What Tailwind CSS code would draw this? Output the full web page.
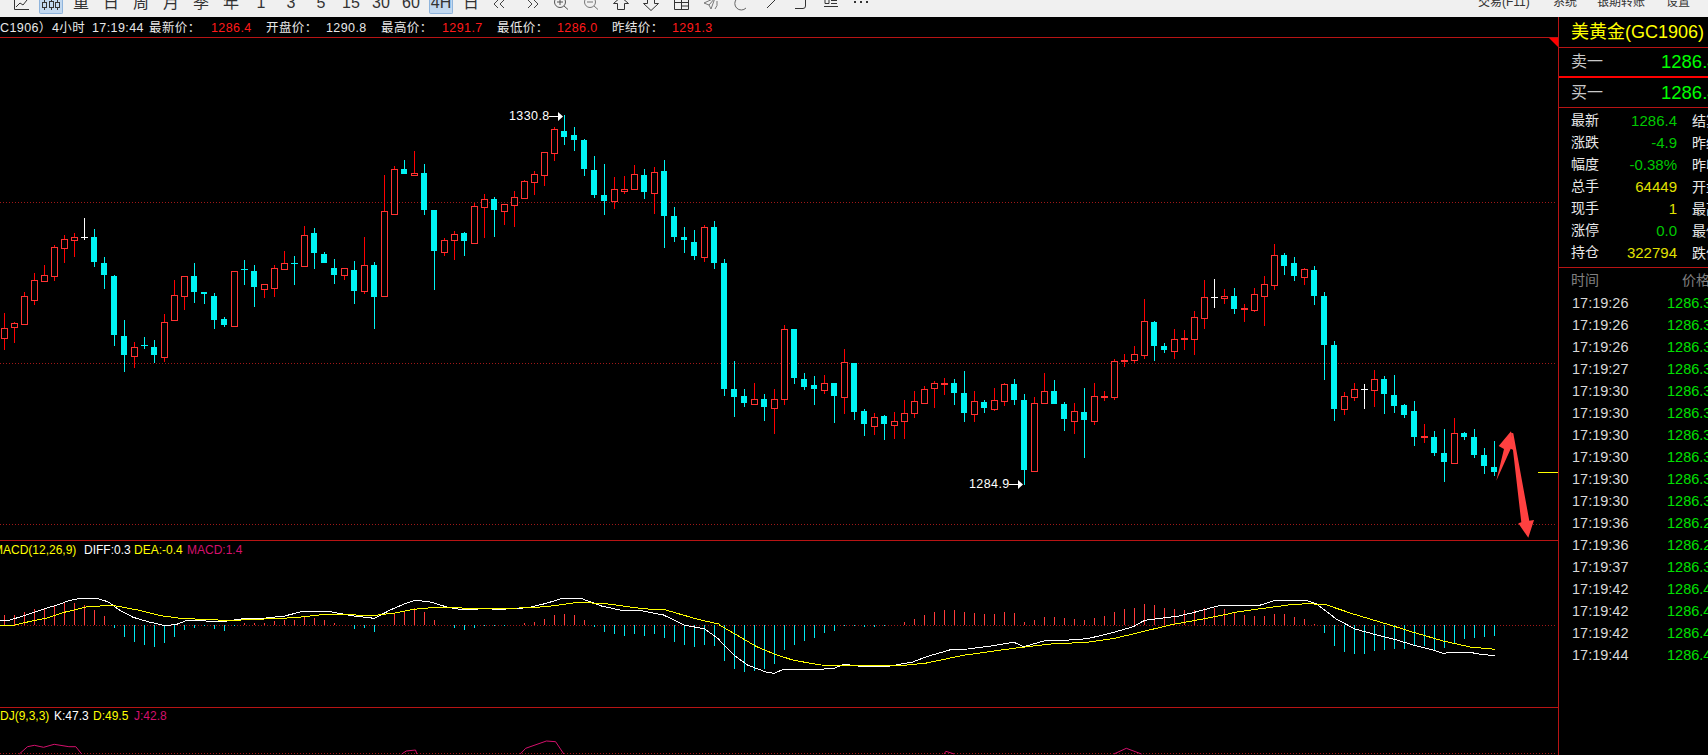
<!DOCTYPE html>
<html lang="zh">
<head>
<meta charset="UTF-8"/>
<title>美黄金 GC1906</title>
<script src="https://cdn.jsdelivr.net/npm/@tailwindcss/browser@4"></script>
</head>
<body class="bg-black">
<div class="w-[1708px] h-[755px] overflow-hidden flex flex-col bg-black font-['Liberation_Sans','Noto_Sans_CJK_SC',sans-serif]">

  <!-- barra de herramientas, cortada por arriba -->
  <div class="h-[17px] shrink-0 bg-[#f0f0f0] flex overflow-hidden text-[#333] pl-[6px]">
    <div class="w-[30px] flex justify-center"><svg class="w-[20px] h-[14px]" viewBox="0 0 20 14" fill="none" stroke="#333"><path d="M3.5 0V9.5H18M5 7L9 3L12 5L16 0"/></svg></div>
    <div class="w-[30px] flex justify-center"><div class="w-[24px] h-[14px] bg-[#c2d8ef] border border-t-0 border-[#8fb4dc] rounded-b-[2px] flex justify-center"><svg class="w-[20px] h-[13px]" viewBox="0 0 20 13" fill="none" stroke="#333"><path d="M3.5 0V10M10.5 0V10M16.5 0V10"/><rect x="1.5" y="2.5" width="4" height="5" fill="#c2d8ef"/><rect x="8.5" y="1.5" width="4" height="6" fill="#c2d8ef"/><rect x="14.5" y="2.5" width="4" height="5" fill="#c2d8ef"/></svg></div></div>
    <div class="w-[30px] text-center text-[16px] leading-[16px] -mt-[5px]">重</div>
    <div class="w-[30px] text-center text-[16px] leading-[16px] -mt-[5px]">日</div>
    <div class="w-[30px] text-center text-[16px] leading-[16px] -mt-[5px]">周</div>
    <div class="w-[30px] text-center text-[16px] leading-[16px] -mt-[5px]">月</div>
    <div class="w-[30px] text-center text-[16px] leading-[16px] -mt-[5px]">季</div>
    <div class="w-[30px] text-center text-[16px] leading-[16px] -mt-[5px]">年</div>
    <div class="w-[30px] text-center text-[16px] leading-[16px] -mt-[5px]">1</div>
    <div class="w-[30px] text-center text-[16px] leading-[16px] -mt-[5px]">3</div>
    <div class="w-[30px] text-center text-[16px] leading-[16px] -mt-[5px]">5</div>
    <div class="w-[30px] text-center text-[16px] leading-[16px] -mt-[5px]">15</div>
    <div class="w-[30px] text-center text-[16px] leading-[16px] -mt-[5px]">30</div>
    <div class="w-[30px] text-center text-[16px] leading-[16px] -mt-[5px]">60</div>
    <div class="w-[30px] flex justify-center"><div class="w-[24px] h-[14px] bg-[#c2d8ef] border border-t-0 border-[#8fb4dc] rounded-b-[2px] text-center text-[16px] leading-[16px] overflow-hidden"><div class="-mt-[5px]">4H</div></div></div>
    <div class="w-[30px] text-center text-[16px] leading-[16px] -mt-[5px]">日</div>
    <div class="w-[30px] flex justify-center"><svg class="w-[20px] h-[14px]" viewBox="0 0 20 14" fill="none" stroke="#444"><path d="M7 0L3 4L7 8M13 0L9 4L13 8"/></svg></div>
    <div class="w-[30px] flex justify-center"><svg class="w-[20px] h-[14px]" viewBox="0 0 20 14" fill="none" stroke="#444"><path d="M7 0L11 4L7 8M13 0L17 4L13 8"/></svg></div>
    <div class="w-[30px] flex justify-center"><svg class="w-[20px] h-[14px]" viewBox="0 0 20 14" fill="none" stroke="#555"><circle cx="9" cy="2" r="5.5"/><path d="M6 2H12M9 -1V5M13 6L17 9.5"/></svg></div>
    <div class="w-[30px] flex justify-center"><svg class="w-[20px] h-[14px]" viewBox="0 0 20 14" fill="none" stroke="#777"><circle cx="9" cy="2" r="5.5"/><path d="M6 2H12M13 6L17 9.5"/></svg></div>
    <div class="w-[30px] flex justify-center"><svg class="w-[20px] h-[14px]" viewBox="0 0 20 14" fill="none" stroke="#333"><path d="M10 -3L17.5 3.5H13.5V9.5H6.5V3.5H2.5Z"/></svg></div>
    <div class="w-[30px] flex justify-center"><svg class="w-[20px] h-[14px]" viewBox="0 0 20 14" fill="none" stroke="#333"><path d="M6.5 -3V3.5H2.5L10 10.5L17.5 3.5H13.5V-3"/></svg></div>
    <div class="w-[30px] flex justify-center"><svg class="w-[20px] h-[14px]" viewBox="0 0 20 14" fill="none" stroke="#333"><path d="M3.5 -1V9.5H17.5V-1M3.5 2.5H17.5M10.5 -1V9.5M10.5 6H17.5"/></svg></div>
    <div class="w-[30px] flex justify-center"><svg class="w-[20px] h-[14px]" viewBox="0 0 20 14" fill="none" stroke="#777"><path d="M3 3L14 -2L10 9L8 5ZM14 -2L8 5M16 1Q17 6 14 9"/></svg></div>
    <div class="w-[30px] flex justify-center"><svg class="w-[20px] h-[14px]" viewBox="0 0 20 14" fill="none" stroke="#666"><path d="M15 -1A6.5 6.5 0 1 0 15 8"/></svg></div>
    <div class="w-[30px] flex justify-center"><svg class="w-[20px] h-[14px]" viewBox="0 0 20 14" fill="none" stroke="#333"><path d="M6 8L14 0"/></svg></div>
    <div class="w-[30px] flex justify-center"><svg class="w-[20px] h-[14px]" viewBox="0 0 20 14" fill="none" stroke="#333"><path d="M4 8.5H12Q14.5 8.5 14.5 6V-1"/></svg></div>
    <div class="w-[30px] flex justify-center"><svg class="w-[20px] h-[14px]" viewBox="0 0 20 14" fill="none" stroke="#333"><path d="M4 -1V3.5H8V0M10 0.5H16M10 3.5H16M3 6.5H17"/></svg></div>
    <div class="w-[30px] flex justify-center"><svg class="w-[20px] h-[14px]" viewBox="0 0 20 14" fill="#333"><rect x="3" y="1" width="2" height="2"/><rect x="9" y="1" width="2" height="2"/><rect x="15" y="1" width="2" height="2"/></svg></div>
    <div class="ml-auto flex text-[12px] leading-[12px] -mt-[4px]">
      <span class="w-[75px]">交易(F11)</span>
      <span class="w-[44px]">系统</span>
      <span class="w-[69px]">银期转账</span>
      <span class="w-[42px]">设置</span>
    </div>
  </div>

  <div class="flex flex-1 min-h-0">
    <!-- graficos -->
    <div class="w-[1559px] shrink-0 flex flex-col border-r border-[#b81414]">
      <div class="h-[21px] shrink-0 pt-[2px] flex items-center border-b border-[#b81414] text-[12.5px] tracking-[0.4px] text-[#e8e8e8] whitespace-nowrap overflow-hidden">
        <span class="w-[52px]">C1906）</span>
        <span class="w-[40px]">4小时</span>
        <span class="w-[57px]">17:19:44</span>
        <span class="w-[62px]">最新价：</span>
        <span class="w-[55px] text-[#ff1a1a]">1286.4</span>
        <span class="w-[60px]">开盘价：</span>
        <span class="w-[55px]">1290.8</span>
        <span class="w-[61px]">最高价：</span>
        <span class="w-[55px] text-[#ff1a1a]">1291.7</span>
        <span class="w-[60px]">最低价：</span>
        <span class="w-[55px] text-[#ff1a1a]">1286.0</span>
        <span class="w-[60px]">昨结价：</span>
        <span class="text-[#ff1a1a]">1291.3</span>
      </div>

      <div class="relative h-[503px] shrink-0 border-b border-[#b81414]">
        <svg id="mainChart" class="block" width="1558" height="502" viewBox="0 38 1558 502" shape-rendering="crispEdges"></svg>
        <div class="absolute left-[509px] top-[71px] flex items-center gap-[2px] text-[12.5px] tracking-[0.4px] leading-[14px] text-white">
          <span class="w-[38px]">1330.8</span>
          <svg width="14" height="9" viewBox="0 0 14 9" fill="#fff"><path d="M0 4H9V5H0ZM9 0L14 4.5L9 9Z"/></svg>
        </div>
        <div class="absolute left-[969px] top-[439px] flex items-center gap-[2px] text-[12.5px] tracking-[0.4px] leading-[14px] text-white">
          <span class="w-[38px]">1284.9</span>
          <svg width="14" height="9" viewBox="0 0 14 9" fill="#fff"><path d="M0 4H9V5H0ZM9 0L14 4.5L9 9Z"/></svg>
        </div>
      </div>

      <div class="relative h-[167px] shrink-0 border-b border-[#b81414] overflow-hidden">
        <div class="flex items-center h-[16px] mt-[1px] text-[12px] whitespace-nowrap -ml-[7px]">
          <span class="w-[91px] text-[#ffff00]">MACD(12,26,9)</span>
          <span class="w-[50px] text-white">DIFF:0.3</span>
          <span class="w-[53px] text-[#ffff00]">DEA:-0.4</span>
          <span class="text-[#d4106c]">MACD:1.4</span>
        </div>
        <svg id="macdChart" class="absolute left-0 top-0" width="1558" height="166" viewBox="0 541 1558 166" fill="none"></svg>
      </div>

      <div class="relative flex-1 overflow-hidden">
        <div class="flex items-center h-[16px] text-[12px] whitespace-nowrap -ml-[8px]">
          <span class="w-[62px] text-[#ffff00]">KDJ(9,3,3)</span>
          <span class="w-[39px] text-white">K:47.3</span>
          <span class="w-[41px] text-[#ffff00]">D:49.5</span>
          <span class="text-[#d4106c]">J:42.8</span>
        </div>
        <svg id="kdjChart" class="absolute left-0 top-0" width="1558" height="47" viewBox="0 708 1558 47" fill="none"></svg>
      </div>
    </div>

    <!-- panel derecho -->
    <div class="flex-1 min-w-0 overflow-hidden flex flex-col whitespace-nowrap">
      <div class="h-[31px] shrink-0 pl-[12px] flex items-center border-b border-[#b81414] text-[18px] text-[#ffff00]">美黄金(GC1906)</div>
      <div class="h-[28px] shrink-0 pl-[12px] flex items-center">
        <span class="w-[90px] shrink-0 text-[16px] text-[#c8c8c8]">卖一</span><span class="text-[18.5px] text-[#00ff00]">1286.4</span>
      </div>
      <div class="h-[2px] shrink-0 bg-[#ff0000]"></div>
      <div class="h-[30px] shrink-0 pl-[12px] flex items-center border-b border-[#b81414]">
        <span class="w-[90px] shrink-0 text-[16px] text-[#c8c8c8]">买一</span><span class="text-[18.5px] text-[#00ff00]">1286.4</span>
      </div>
      <div class="h-[160px] shrink-0 pt-[2px] border-b border-[#b81414] text-[14px] text-[#e8e8e8]">
        <div class="h-[22px] pl-[12px] flex items-center"><div class="w-[106px] shrink-0 flex justify-between"><span>最新</span><span class="text-[15px] text-[#00c800]">1286.4</span></div><span class="ml-[15px]">结算</span></div>
        <div class="h-[22px] pl-[12px] flex items-center"><div class="w-[106px] shrink-0 flex justify-between"><span>涨跌</span><span class="text-[15px] text-[#00c800]">-4.9</span></div><span class="ml-[15px]">昨结</span></div>
        <div class="h-[22px] pl-[12px] flex items-center"><div class="w-[106px] shrink-0 flex justify-between"><span>幅度</span><span class="text-[15px] text-[#00c800]">-0.38%</span></div><span class="ml-[15px]">昨收</span></div>
        <div class="h-[22px] pl-[12px] flex items-center"><div class="w-[106px] shrink-0 flex justify-between"><span>总手</span><span class="text-[15px] text-[#e0e000]">64449</span></div><span class="ml-[15px]">开盘</span></div>
        <div class="h-[22px] pl-[12px] flex items-center"><div class="w-[106px] shrink-0 flex justify-between"><span>现手</span><span class="text-[15px] text-[#e0e000]">1</span></div><span class="ml-[15px]">最高</span></div>
        <div class="h-[22px] pl-[12px] flex items-center"><div class="w-[106px] shrink-0 flex justify-between"><span>涨停</span><span class="text-[15px] text-[#00c800]">0.0</span></div><span class="ml-[15px]">最低</span></div>
        <div class="h-[22px] pl-[12px] flex items-center"><div class="w-[106px] shrink-0 flex justify-between"><span>持仓</span><span class="text-[15px] text-[#e0e000]">322794</span></div><span class="ml-[15px]">跌停</span></div>
      </div>
      <div class="h-[24px] shrink-0 pl-[12px] flex items-center text-[14px] text-[#808080]">
        <span class="w-[111px] shrink-0">时间</span><span>价格</span>
      </div>
      <div id="ticks" class="pt-[1px]"></div>
    </div>
  </div>
</div>

<script>
  // velas: [color, maximo, techo, suelo, minimo] en pixeles del zoom (y = y0 + z/3)
  const grupos = [
    [100, [
      ["R",640,685,713,750],["R",665,670,680,729],["R",577,589,671,671],["R",520,541,599,615],["R",496,526,542,542],["R",436,442,527,543],
      ["R",406,418,443,489],["R",400,412,419,471],["W",354,412,413,420],["C",388,412,486,501],["C",472,490,525,567],["C",525,529,705,738],
      ["C",660,709,765,816],["R",727,742,767,804],["C",712,736,738,747],["C",721,742,765,789],["R",643,667,770,786],["R",541,586,659,663],
      ["R",529,529,587,630],["C",490,529,576,609],["C",576,576,582,612],["C",580,589,660,687],["C",652,658,675,681],["R",514,514,677,681],
      ["C",481,507,510,555],["C",496,514,561,621],["R",551,553,566,594],["R",496,505,563,591],["R",454,490,506,506],["C",469,489,492,555],
      ["R",379,406,497,497],["C",385,400,459,507],["C",457,463,489,489],["C",478,505,525,552],["R",505,505,524,540],["C",484,511,573,612],
      ["R",412,496,572,582],["C",487,496,591,687],["R",226,334,587,587],["R",198,208,341,341],["C",181,208,222,222],["R",154,220,224,224],
      ["C",193,220,330,345],["C",330,331,453,570],["R",415,421,455,468],["R",394,403,419,480],["C",397,400,423,468],["R",310,319,428,428]
    ]],
    [100, [
      ["R",283,298,320,414],["C",292,298,330,411],["R",313,313,332,376],["R",274,292,314,381],["R",241,244,293,293],["R",214,223,245,286],
      ["R",157,157,224,258],["R",82,88,158,183],["C",46,94,111,135],["C",82,106,120,153],["C",118,121,207,228],["C",169,211,285,294],
      ["C",193,286,303,345],["R",232,268,302,327],["R",229,268,272,282],["R",196,223,267,270],["C",208,226,276,297],["R",202,217,278,342],
      ["C",181,214,348,444],["C",322,349,411,426],["C",382,411,420,459],["C",391,427,468,480],["R",376,382,470,486],["C",364,382,489,507],
      ["C",478,490,867,888],["C",784,868,891,951],["C",868,889,909,921],["R",850,898,911,915],["C",883,898,921,963],["R",868,898,923,1002],
      ["R",676,688,896,915],["C",688,688,834,852],["C",820,838,862,870],["C",829,856,867,915],["R",826,850,869,882],["C",850,850,888,969],
      ["R",748,787,890,942],["C",790,790,936,960],["C",928,934,972,1008],["R",940,952,977,1005],["C",946,949,972,1020],["R",937,964,974,1017],
      ["R",901,940,962,1017],["R",874,904,938,953],["R",859,868,908,911],["R",844,850,863,924],["R",835,850,851,885],["C",838,850,879,915]
    ]],
    [230, [
      ["C",424,490,549,576],["R",484,514,551,576],["C",511,517,534,549],["R",475,511,536,543],["R",460,463,514,528],["C",448,463,510,525],
      ["C",493,511,720,765],["R",502,520,722,724],["R",430,484,519,522],["C",451,484,522,522],["C",517,523,567,603],["R",520,544,572,612],
      ["C",475,547,570,684],["R",460,499,572,586],["R",484,498,500,514],["R",388,394,500,510],["R",373,389,392,411],["R",349,373,389,400],
      ["R",208,274,374,387],["C",273,277,348,393],["C",340,349,360,369],["R",298,328,362,387],["R",301,323,326,360],["R",244,262,326,375],
      ["R",151,202,263,297],["W",148,202,203,234],["R",178,199,203,222],["C",175,199,237,252],["R",223,235,238,276],["R",175,193,240,246],
      ["R",139,163,197,288],["R",43,76,164,180],["C",70,76,108,135],["C",82,100,138,153],["R",115,118,140,165],["C",109,121,198,225],
      ["C",187,199,345,450],["C",334,346,537,573],["R",487,499,536,555],["R",460,478,500,513],["W",463,478,479,537],["R",421,448,479,531],
      ["C",439,448,492,552],["C",436,496,528,549]
    ]],
    [270, [
      ["C",403,405,434,443],["C",394,423,500,528],["R",463,498,502,519],["C",484,502,549,558],["C",478,549,576,636],
      ["R",445,490,578,578],["C",487,490,501,510],["C",478,501,555,564],["C",535,555,588,612],["C",514,591,606,618]
    ]]
  ];

  const ROJO = "#ff0000", ROJO_CUERPO = "#ff3333", CIAN = "#00f4f4";
  let svg = "";

  // lineas punteadas
  [202, 363, 524].forEach(y => {
    svg += `<line x1="0" x2="1556" y1="${y}.5" y2="${y}.5" stroke="#a01818" stroke-dasharray="1 2"/>`;
  });

  let i = 0;
  grupos.forEach(([y0, velas]) => {
    velas.forEach(([c, h, t, b, l]) => {
      const x = 4 + i * 10;
      const yh = Math.round(y0 + h / 3), yt = Math.round(y0 + t / 3), yb = Math.round(y0 + b / 3), yl = Math.round(y0 + l / 3);
      const fino = yb - yt < 2;
      const col = c === "C" ? CIAN : c === "W" ? "#ffffff" : ROJO;
      if (c === "R" && !fino) {
        // vela hueca
        if (yt > yh) svg += `<rect x="${x}" y="${yh}" width="1" height="${yt - yh}" fill="${col}"/>`;
        if (yl > yb) svg += `<rect x="${x}" y="${yb}" width="1" height="${yl - yb}" fill="${col}"/>`;
        svg += `<rect x="${x - 3 + 0.5}" y="${yt + 0.5}" width="6" height="${yb - yt}" fill="#000" stroke="${ROJO_CUERPO}"/>`;
      } else if (fino) {
        svg += `<rect x="${x}" y="${yh}" width="1" height="${Math.max(yl - yh, 1)}" fill="${col}"/>`;
        svg += `<rect x="${x - 3}" y="${yt}" width="7" height="${c === "R" ? 2 : 1}" fill="${c === "R" ? ROJO_CUERPO : col}"/>`;
      } else {
        svg += `<rect x="${x}" y="${yh}" width="1" height="${Math.max(yl - yh, 1)}" fill="${col}"/>`;
        svg += `<rect x="${x - 3}" y="${yt}" width="6" height="${yb - yt}" fill="${col}"/>`;
      }
      i++;
    });
  });

  // marcador amarillo y triangulo de la esquina
  svg += `<rect x="1538" y="472" width="20" height="1" fill="#ffff00"/>`;
  svg += `<polygon points="1549,38 1558,38 1558,47" fill="#ff0000" shape-rendering="auto"/>`;

  // flechas dibujadas a mano encima del grafico
  const flecha = pts => pts.map(([x, y]) => `${(1400 + x / 3).toFixed(1)},${(270 + y / 3).toFixed(1)}`).join(" ");
  svg += `<polygon shape-rendering="auto" fill="#ff4040" points="${flecha([[289,632],[312,537],[296,528],[333,484],[342,541],[332,536]])}"/>`;
  svg += `<polygon shape-rendering="auto" fill="#ff4040" points="${flecha([[333,488],[340,490],[388,752],[402,750],[385,803],[355,760],[364,757]])}"/>`;
  document.getElementById("mainChart").innerHTML = svg;

  // MACD: puntas de las barras (zoom, y = 530 + z/3)
  const barras = [255,255,246,238,234,228,219,219,225,240,258,293,321,336,345,351,339,321,300,293,288,297,303,287,279,279,279,273,270,270,261,264,270,279,286,297,293,306,286,252,243,234,246,270,286,294,300,293,288,288,288,286,279,276,267,255,252,255,270,291,306,312,318,312,318,312,324,336,345,351,345,348,
    393,417,426,423,417,402,360,345,333,324,309,303,288,288,291,291,288,286,276,267,255,246,240,240,246,249,252,252,246,249,276,270,261,261,264,267,270,264,258,246,237,234,222,225,234,237,240,240,234,234,237,249,255,258,258,252,252,261,267,282,309,348,366,372,372,363,360,357,357,348,348,360];
  // ultimas barras, y = 590 + z/3
  const barrasFin = [174,160,147,144,141,138];

  const a7 = pts => pts.map(([x, y]) => `${(x / 2.178).toFixed(1)},${(530 + y / 3).toFixed(1)}`).join(" ");
  const a8 = pts => pts.map(([x, y]) => `${(720 + x / 2.178).toFixed(1)},${(530 + y / 3).toFixed(1)}`).join(" ");
  const a10 = pts => pts.map(([x, y]) => `${(1300 + x / 3).toFixed(1)},${(590 + y / 3).toFixed(1)}`).join(" ");

  let m = `<line x1="0" x2="1556" y1="625.5" y2="625.5" stroke="#a01818" stroke-dasharray="1 2"/>`;
  const barra = (x, y) => {
    if (y === 625) return "";
    const arriba = y < 625;
    return `<rect x="${x}" y="${arriba ? y : 625}" width="1" height="${Math.abs(y - 625)}" fill="${arriba ? "#ff3a3a" : "#00e8f0"}"/>`;
  };
  barras.forEach((z, n) => { m += barra(4 + n * 10, Math.round(530 + z / 3)); });
  barrasFin.forEach((z, n) => { m += barra(1444 + n * 10, Math.round(590 + z / 3)); });

  const blanca = a7([[0,273],[22,270],[50,258],[75,247],[100,235],[125,225],[150,212],[175,205],[210,205],[235,215],[260,240],[290,262],[325,276],[360,287],[385,283],[405,272],[440,272],[480,276],[530,266],[580,264],[620,258],[660,244],[715,244],[770,258],[815,265],[850,240],[880,222],[905,211],[935,215],[975,232],[1010,240],[1050,236],[1090,238],[1150,233],[1190,220],[1220,207],[1265,205],[1310,228],[1350,240],[1400,243],[1445,255],[1490,285],[1535,297],[1568,330]])
    + " " + a8([[0,333],[30,375],[60,405],[100,426],[118,430],[138,418],[220,418],[250,414],[270,403],[300,408],[370,408],[420,396],[450,380],[505,358],[540,357],[590,348],[640,337],[662,350],[705,333],[760,330],[800,326],[850,310],[900,290],[925,271],[1000,258],[1030,248],[1090,226],[1175,226],[1205,213],[1275,211]])
    + " " + a10([[20,32],[50,42],[80,65],[110,88],[165,117],[220,132],[280,147],[340,165],[400,180],[430,190],[460,187],[510,187],[540,193],[585,197]]);
  const amarilla = a7([[0,288],[30,286],[60,276],[100,265],[140,247],[190,230],[245,226],[300,240],[350,257],[400,266],[450,268],[500,272],[550,268],[600,266],[650,262],[700,254],[760,254],[810,257],[860,249],[900,238],[950,232],[1030,235],[1130,234],[1190,230],[1260,217],[1320,221],[1400,236],[1450,240],[1520,268],[1568,283]])
    + " " + a8([[0,286],[40,318],[80,350],[120,373],[160,391],[220,405],[300,407],[400,406],[450,399],[530,376],[640,355],[720,342],[800,337],[860,325],[920,305],[980,285],[1060,265],[1130,245],[1200,232],[1250,223]])
    + " " + a10([[30,41],[80,45],[160,72],[280,108],[340,127],[430,153],[510,171],[585,178]]);
  m += `<polyline points="${blanca}" stroke="#ffffff" fill="none"/>`;
  m += `<polyline points="${amarilla}" stroke="#ffff00" fill="none"/>`;
  const macd = document.getElementById("macdChart");
  macd.setAttribute("shape-rendering", "crispEdges");
  macd.innerHTML = m;

  // KDJ: solo asoman las crestas de la linea J
  const J = "#d4106c";
  let k = `<line x1="0" x2="1556" y1="753.5" y2="753.5" stroke="#a01818" stroke-dasharray="1 2"/>`;
  [
    a7([[42,672],[60,650],[75,646],[95,652],[118,643],[150,650],[165,650],[178,672]]),
    a7([[875,672],[885,663],[905,660],[908,672]]),
    a7([[1133,672],[1145,655],[1190,633],[1210,635],[1228,672]]),
    a8([[488,672],[492,664],[510,672]]),
    a8([[858,672],[885,655],[918,672]])
  ].forEach(p => { k += `<polyline points="${p}" stroke="${J}" fill="none"/>`; });
  document.getElementById("kdjChart").innerHTML = k;

  // detalle de operaciones
  const ticks = [["17:19:26","1286.3"],["17:19:26","1286.3"],["17:19:26","1286.3"],["17:19:27","1286.3"],["17:19:30","1286.3"],["17:19:30","1286.3"],["17:19:30","1286.3"],["17:19:30","1286.3"],["17:19:30","1286.3"],["17:19:30","1286.3"],["17:19:36","1286.2"],["17:19:36","1286.2"],["17:19:37","1286.3"],["17:19:42","1286.4"],["17:19:42","1286.4"],["17:19:42","1286.4"],["17:19:44","1286.4"]];
  document.getElementById("ticks").innerHTML = ticks.map(([t, p]) =>
    `<div class="h-[22px] pl-[13px] flex items-center text-[14.5px]"><span class="w-[95px] shrink-0 text-[#d8d8d8]">${t}</span><span class="text-[#00e000]">${p}</span></div>`
  ).join("");
</script>
</body>
</html>
